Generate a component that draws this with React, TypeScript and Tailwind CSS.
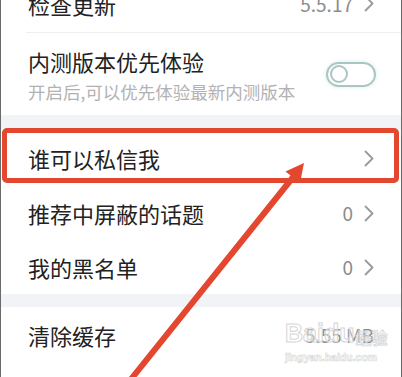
import React from 'react';

const font = { fontFamily: '"Noto Sans CJK SC", "Noto Sans", sans-serif' };

function Chevron() {
  return (
    <svg width="10" height="17" viewBox="0 0 10 17" fill="none" className="shrink-0">
      <path d="M1.5 1.5 L8.5 8.5 L1.5 15.5" stroke="#9a9a9a" strokeWidth="1.8" strokeLinecap="round" strokeLinejoin="round" />
    </svg>
  );
}

function Row({ title, value, chevron = true, h = 'h-[54px]' }: { title: string; value?: string; chevron?: boolean; h?: string }) {
  return (
    <div className={`flex items-center justify-between bg-white pl-[27px] pr-[27px] ${h}`}>
      <span className="text-[22px] leading-[30px] text-[#222222]">{title}</span>
      <div className="flex items-center gap-[11px]">
        {value && <span className="text-[19px] leading-[26px] text-[#8c8c8c]">{value}</span>}
        {chevron && <Chevron />}
      </div>
    </div>
  );
}

export default function App() {
  return (
    <div
      className="relative w-[402px] h-[377px] overflow-hidden bg-white border-x border-[#6a6a6a]"
      style={font}
    >
      <div className="-mt-[25px]">
        <Row title="检查更新" value="5.5.17" h="h-[57px]" />
        <div className="ml-[25px] h-px bg-[#efefef]" />

        {/* 内测版本 */}
        <div className="flex items-center justify-between bg-white pl-[27px] pr-[25px] h-[82px]">
          <div className="flex flex-col pt-[1px]">
            <span className="text-[22px] leading-[30px] text-[#222222]">内测版本优先体验</span>
            <span className="mt-[4px] text-[17.5px] leading-[24px] text-[#b2b2b2] whitespace-nowrap">开启后,可以优先体验最新内测版本</span>
          </div>
          <div className="flex items-center w-[50px] h-[25px] rounded-full border-2 border-[#a9c6c2] px-[2px] shadow-[0_0_4px_rgba(150,200,195,0.35)]">
            <div className="w-[18px] h-[18px] rounded-full border-2 border-[#a9c6c2]" />
          </div>
        </div>

        <div className="h-[15px] bg-[#f2f3f7]" />

        <div className="relative">
          <Row title="谁可以私信我" h="h-[56px]" />
          <div className="absolute left-[1px] right-[2px] -top-[2px] bottom-[3px] rounded-[5px] border-[5px] border-[#e4472f]" />
        </div>
        <Row title="推荐中屏蔽的话题" value="0" />
        <Row title="我的黑名单" value="0" />

        <div className="h-[13px] bg-[#f2f3f7]" />

        <Row title="清除缓存" value="5.55 MB" chevron={false} h="h-[56px]" />
        <div className="h-[40px] bg-white" />
      </div>

      {/* watermark */}
      <div className="absolute left-[284px] top-[321px] flex flex-col items-start pointer-events-none select-none whitespace-nowrap">
        <div className="flex items-end leading-none">
          <span className="text-[25px] font-bold text-white/40 [-webkit-text-stroke:1px_#d6d6d6]" style={{ fontFamily: '"Liberation Sans", sans-serif' }}>
            Baidu
          </span>
          <span className="ml-[1px] mb-[1px] text-[16px] font-bold text-white/40 [-webkit-text-stroke:0.8px_#d6d6d6]">经验</span>
        </div>
        <span className="mt-[6px] text-[10.5px] leading-none font-bold text-white/40 [-webkit-text-stroke:0.6px_#d6d6d6]" style={{ fontFamily: '"Liberation Sans", sans-serif' }}>
          jingyan.baidu.com
        </span>
      </div>

      {/* annotation arrow */}
      <svg className="absolute inset-0 pointer-events-none" width="402" height="377" viewBox="0 0 402 377">
        <line x1="127" y1="383" x2="293" y2="176" stroke="#e4472f" strokeWidth="6" />
        <polygon points="303,163 284.5,171.5 299,183" fill="#e4472f" />
      </svg>
    </div>
  );
}
